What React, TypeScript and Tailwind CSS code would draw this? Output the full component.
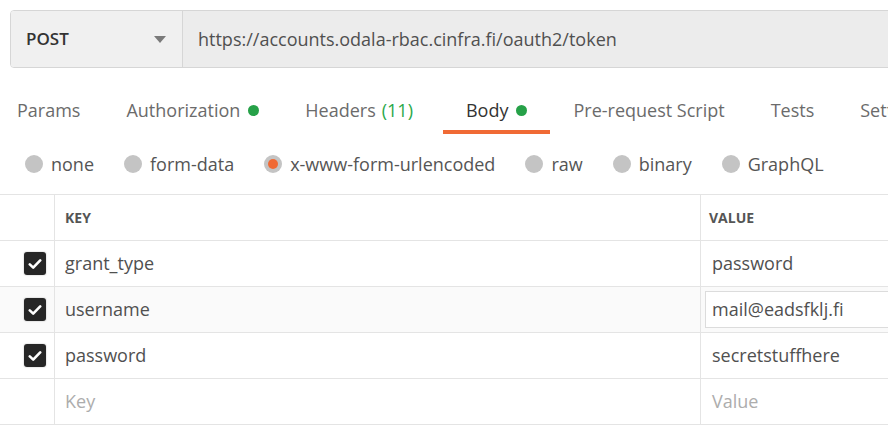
import React from "react";

const tabs = [
  { label: "Params" },
  { label: "Authorization", dot: true },
  { label: "Headers", count: "(11)" },
  { label: "Body", dot: true, active: true },
  { label: "Pre-request Script" },
  { label: "Tests" },
  { label: "Settings" },
];

const radios = [
  { label: "none" },
  { label: "form-data" },
  { label: "x-www-form-urlencoded", selected: true },
  { label: "raw" },
  { label: "binary" },
  { label: "GraphQL" },
];

const rows = [
  { k: "grant_type", v: "password" },
  { k: "username", v: "mail@eadsfklj.fi", focus: true },
  { k: "password", v: "secretstuffhere" },
];

function Check() {
  return (
    <div className="w-[22px] h-[23px] rounded-[3px] bg-[#262626] flex items-center justify-center shadow-[0_0_1px_1px_rgba(0,0,0,0.08)]">
      <svg width="14" height="12" viewBox="0 0 14 12">
        <path d="M1.8 6.4 L5.2 9.6 L12.2 2.4" fill="none" stroke="white" strokeWidth="2.6" strokeLinecap="round" strokeLinejoin="round" />
      </svg>
    </div>
  );
}

export default function App() {
  return (
    <div className="w-[888px] h-[436px] overflow-hidden bg-white text-[#505050]" style={{ fontFamily: "'Open Sans', sans-serif" }}>
      <div className="pt-[10px] pl-[10px]">
        <div className="flex h-[58px] w-[900px] border border-[#d6d6d6] rounded-l-[4px] overflow-hidden">
          <div className="w-[172px] shrink-0 bg-[#f0f0f0] border-r border-[#d6d6d6] flex items-center pl-[15px] pr-[16px]">
            <span className="text-[17px] font-semibold text-[#333] flex-1">POST</span>
            <svg width="12" height="7" viewBox="0 0 12 7"><path d="M0 0 L12 0 L6 7 Z" fill="#7a7a7a" /></svg>
          </div>
          <div className="flex-1 bg-[#ececec] flex items-center pl-[15px] text-[18px] text-[#505050]">
            https://accounts.odala-rbac.cinfra.fi/oauth2/token
          </div>
        </div>
      </div>

      <div className="flex ml-[-6px] mt-[22px] h-[46px] whitespace-nowrap">
        {tabs.map((t) => (
          <div key={t.label} className={`px-[23px] relative flex items-center h-full text-[18px] ${t.active ? "text-[#333]" : "text-[#6b6b6b]"}`}>
            <div className="flex items-center pb-[6px]">
              <span>{t.label}</span>
              {t.count && <span className="ml-[6px] mr-[7px] text-[#2aa84a]">{t.count}</span>}
              {t.dot && <span className="ml-[8px] w-[11px] h-[11px] rounded-full bg-[#26a148]" />}
            </div>
            {t.active && <div className="absolute left-0 right-0 bottom-[2px] h-[4px] bg-[#f06a35]" />}
          </div>
        ))}
      </div>

      <div className="flex items-center h-[44px] mt-[6px] pl-[25px] gap-[30px] whitespace-nowrap">
        {radios.map((r) => (
          <div key={r.label} className="flex items-center gap-[8px] text-[18px] text-[#555]">
            <span className="w-[18px] h-[18px] rounded-full bg-[#c4c4c4] flex items-center justify-center">
              {r.selected && <span className="w-[10px] h-[10px] rounded-full bg-[#f06a35]" />}
            </span>
            <span>{r.label}</span>
          </div>
        ))}
      </div>

      <div className="mt-[8px] border-t border-[#e4e4e4] w-[900px]">
        <div className="flex h-[46px] border-b border-[#e4e4e4]">
          <div className="w-[55px] border-r border-[#e4e4e4]" />
          <div className="w-[646px] border-r border-[#e4e4e4] flex items-center pl-[10px] text-[14px] font-bold text-[#555]">KEY</div>
          <div className="flex-1 flex items-center pl-[8px] text-[14px] font-bold text-[#555]">VALUE</div>
        </div>
        {rows.map((r) => (
          <div key={r.k} className={`flex h-[46px] border-b border-[#e4e4e4] ${r.focus ? "bg-[#fafafa]" : ""}`}>
            <div className="w-[55px] border-r border-[#e4e4e4] flex items-center pl-[24px]">
              <Check />
            </div>
            <div className="w-[646px] border-r border-[#e4e4e4] flex items-center pl-[10px] text-[18px] text-[#505050]">{r.k}</div>
            <div className="flex-1 flex items-center pl-[4px]">
              {r.focus ? (
                <div className="h-[37px] w-full border border-[#dcdcdc] bg-white flex items-center pl-[6px] text-[18px] text-[#505050]">{r.v}</div>
              ) : (
                <span className="pl-[7px] text-[18px] text-[#505050]">{r.v}</span>
              )}
            </div>
          </div>
        ))}
        <div className="flex h-[46px] border-b border-[#e4e4e4]">
          <div className="w-[55px] border-r border-[#e4e4e4]" />
          <div className="w-[646px] border-r border-[#e4e4e4] flex items-center pl-[10px] text-[18px] text-[#adadad]">Key</div>
          <div className="flex-1 flex items-center pl-[11px] text-[18px] text-[#adadad]">Value</div>
        </div>
      </div>
    </div>
  );
}
